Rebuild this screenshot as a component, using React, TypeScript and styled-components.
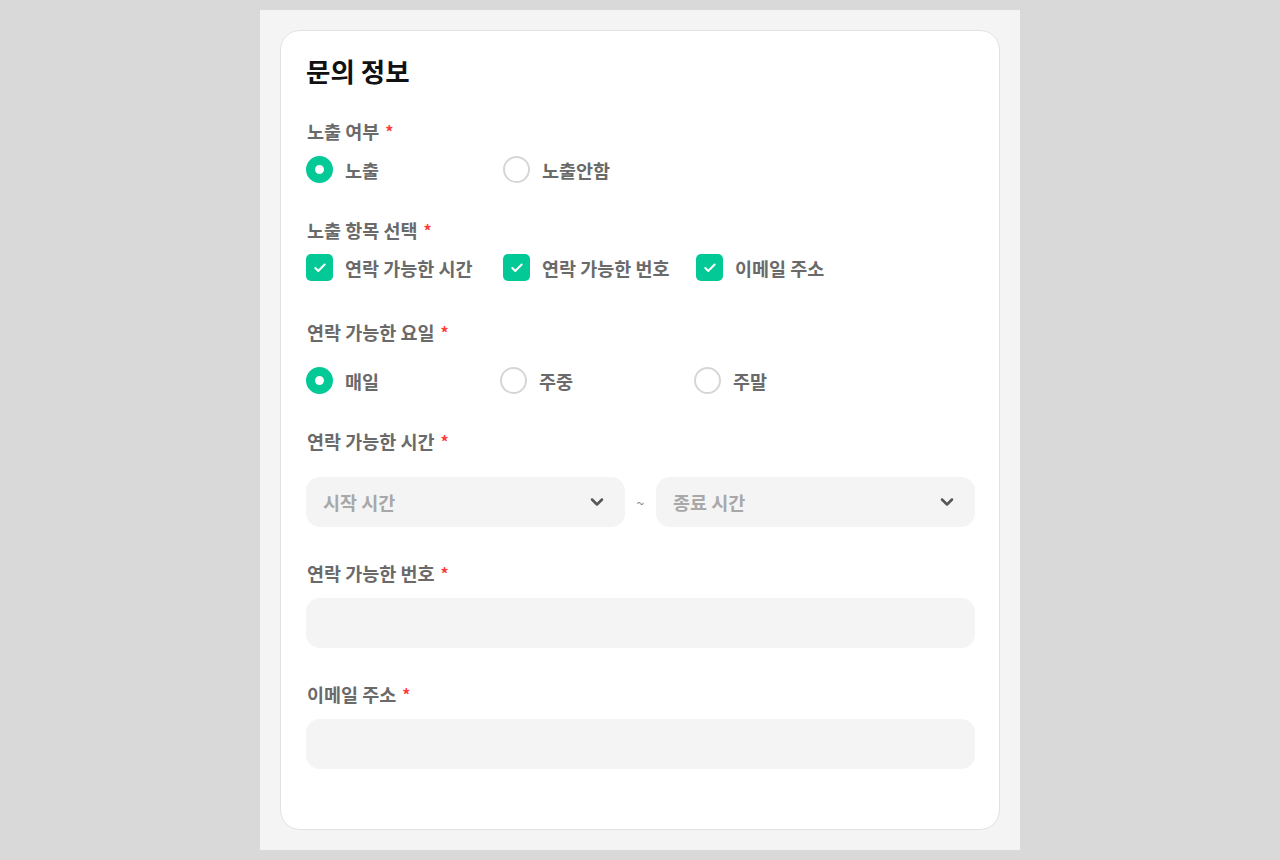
import React, { FC, ReactNode } from 'react';
import styled, { createGlobalStyle } from 'styled-components';
import { ChevronDown, Check } from 'lucide-react';

const GlobalStyle = createGlobalStyle`
  html, body {
    margin: 0;
    padding: 0;
    background: #d9d9d9;
  }
  body {
    font-family: 'Noto Sans CJK KR', 'Noto Sans', sans-serif;
  }
`;

const green = '#03c996';

const Panel = styled.div`
  width: 760px;
  margin: 10px auto 10px;
  padding: 20px;
  box-sizing: border-box;
  background: #f4f4f4;
`;

const Card = styled.section`
  background: #fff;
  border: 1px solid #e2e2e2;
  border-radius: 20px;
  padding: 24px 24px 60px 25px;
`;

const Title = styled.h2`
  margin: 0;
  height: 30px;
  display: flex;
  align-items: center;
  font-size: 26.5px;
  font-weight: 700;
  color: #111;
`;

const Field = styled.div<{ $top: number; $gap: number }>`
  display: flex;
  flex-direction: column;
  gap: ${(p) => p.$gap}px;
  margin-top: ${(p) => p.$top}px;
`;

const Label = styled.div`
  height: 24px;
  display: flex;
  align-items: center;
  font-size: 18.5px;
  font-weight: 700;
  color: #6a6a6a;
  padding-left: 1px;
`;

const Required = styled.span`
  color: #ff3b3b;
  margin-left: 6px;
  font-size: 16px;
  line-height: 1;
`;

const OptionRow = styled.div<{ $cols: string }>`
  display: grid;
  grid-template-columns: ${(p) => p.$cols};
  align-items: center;
  height: 27px;
`;

const Option = styled.label`
  display: flex;
  align-items: center;
  gap: 12px;
  height: 27px;
  font-size: 18.5px;
  font-weight: 700;
  color: #6a6a6a;
  cursor: pointer;
  white-space: nowrap;
`;

const RadioCircle = styled.span<{ $on?: boolean }>`
  width: 27px;
  height: 27px;
  box-sizing: border-box;
  border-radius: 50%;
  border: ${(p) => (p.$on ? `9px solid ${green}` : '2px solid #d6d6d6')};
  background: #fff;
  flex: none;
`;

const CheckBox = styled.span`
  width: 27px;
  height: 27px;
  border-radius: 5px;
  background: ${green};
  display: flex;
  align-items: center;
  justify-content: center;
  color: #fff;
  flex: none;
`;

const TimeRow = styled.div`
  display: grid;
  grid-template-columns: 1fr 31px 1fr;
  align-items: center;
`;

const Select = styled.div`
  height: 50px;
  border-radius: 14px;
  background: #f4f4f4;
  display: flex;
  align-items: center;
  justify-content: space-between;
  padding: 0 18px 0 17px;
  font-size: 18.5px;
  font-weight: 700;
  color: #a8a8a8;
  svg {
    color: #555;
  }
`;

const Tilde = styled.span`
  text-align: center;
  font-size: 14px;
  color: #888;
  padding-top: 2px;
`;

const Input = styled.input`
  height: 50px;
  border: none;
  outline: none;
  border-radius: 14px;
  background: #f4f4f4;
  padding: 0 17px;
  font-family: inherit;
  font-size: 17px;
`;

const FieldLabel: FC<{ children: ReactNode }> = ({ children }) => (
  <Label>
    {children}
    <Required>*</Required>
  </Label>
);

const Radio: FC<{ label: string; on?: boolean }> = ({ label, on }) => (
  <Option>
    <RadioCircle $on={on} />
    {label}
  </Option>
);

const CheckItem: FC<{ label: string }> = ({ label }) => (
  <Option>
    <CheckBox>
      <Check size={14} strokeWidth={3.5} />
    </CheckBox>
    {label}
  </Option>
);

const App: FC = () => (
  <>
    <GlobalStyle />
    <Panel>
      <Card>
        <Title>문의 정보</Title>

        <Field $top={34} $gap={13}>
          <FieldLabel>노출 여부</FieldLabel>
          <OptionRow $cols="197px 197px">
            <Radio label="노출" on />
            <Radio label="노출안함" />
          </OptionRow>
        </Field>

        <Field $top={35} $gap={12}>
          <FieldLabel>노출 항목 선택</FieldLabel>
          <OptionRow $cols="197px 193px auto">
            <CheckItem label="연락 가능한 시간" />
            <CheckItem label="연락 가능한 번호" />
            <CheckItem label="이메일 주소" />
          </OptionRow>
        </Field>

        <Field $top={39} $gap={23}>
          <FieldLabel>연락 가능한 요일</FieldLabel>
          <OptionRow $cols="194px 194px 194px">
            <Radio label="매일" on />
            <Radio label="주중" />
            <Radio label="주말" />
          </OptionRow>
        </Field>

        <Field $top={35} $gap={24}>
          <FieldLabel>연락 가능한 시간</FieldLabel>
          <TimeRow>
            <Select>
              시작 시간
              <ChevronDown size={20} strokeWidth={3} />
            </Select>
            <Tilde>~</Tilde>
            <Select>
              종료 시간
              <ChevronDown size={20} strokeWidth={3} />
            </Select>
          </TimeRow>
        </Field>

        <Field $top={34} $gap={13}>
          <FieldLabel>연락 가능한 번호</FieldLabel>
          <Input />
        </Field>

        <Field $top={34} $gap={13}>
          <FieldLabel>이메일 주소</FieldLabel>
          <Input />
        </Field>
      </Card>
    </Panel>
  </>
);

export default App;
